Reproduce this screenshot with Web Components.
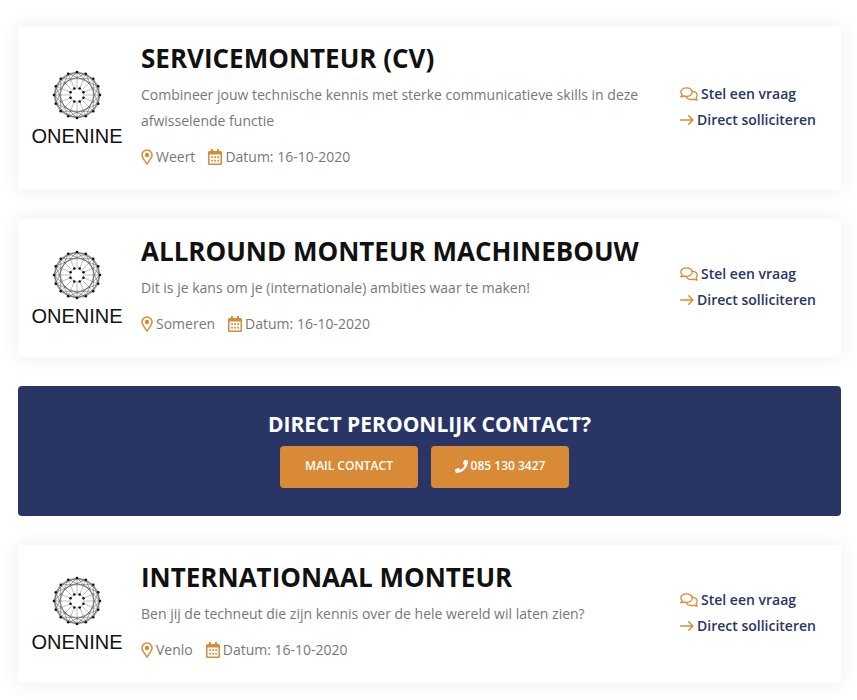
<!DOCTYPE html>
<html lang="nl">
<head>
<meta charset="utf-8">
<meta name="viewport" content="width=device-width, initial-scale=1">
<title>Vacatures</title>
<style>
  :root {
    --navy: #293565;
    --orange: #d98a36;
    --ink: #111;
    --grey: #777;
  }
  body {
    margin: 0;
    background: #fff;
    color: var(--grey);
    font: 14px/26px "Open Sans", "Noto Sans", sans-serif;
  }
</style>
</head>
<body>
<job-list>
  <job-card place="Weert" date="16-10-2020">
    <span slot="title">SERVICEMONTEUR (CV)</span>
    Combineer jouw technische kennis met sterke communicatieve skills in deze afwisselende functie
  </job-card>
  <job-card place="Someren" date="16-10-2020">
    <span slot="title">ALLROUND MONTEUR MACHINEBOUW</span>
    Dit is je kans om je (internationale) ambities waar te maken!
  </job-card>
  <contact-banner phone="085 130 3427">DIRECT PEROONLIJK CONTACT?</contact-banner>
  <job-card place="Venlo" date="16-10-2020">
    <span slot="title">INTERNATIONAAL MONTEUR</span>
    Ben jij de techneut die zijn kennis over de hele wereld wil laten zien?
  </job-card>
</job-list>

<script>
const ICONS = {
  pin: `<svg viewBox="0 0 12 16" width="12" height="16"><path d="M6 15C4.900 13.300 1 8.700 1 6a5 5 0 0 1 10 0C11 8.700 7.100 13.300 6 15z" fill="none" stroke="currentColor" stroke-width="1.500" stroke-linejoin="round"/><circle cx="6" cy="6" r="2.200" fill="currentColor"/></svg>`,
  calendar: `<svg viewBox="0 0 14 16" width="14" height="16"><path fill="currentColor" fill-rule="evenodd" d="M3 .4a.4.400 0 0 1 .4-.4h1.200a.4.400 0 0 1 .4.400V2h4V.4a.4.400 0 0 1 .4-.4h1.200a.4.400 0 0 1 .4.400V2h1.500A1.500 1.500 0 0 1 14 3.500v11a1.500 1.500 0 0 1-1.500 1.500h-11A1.500 1.500 0 0 1 0 14.500v-11A1.500 1.500 0 0 1 1.500 2H3zM1.500 5.500v8.600c0 .2.200.4.400.4h10.200c.2 0 .4-.2.400-.4V5.500z"/><path fill="currentColor" d="M3.200 7.200h1.700v1.700H3.200zm3 0h1.700v1.700H6.200zm3 0h1.700v1.700H9.200zm-6 3.500h1.700v1.700H3.200zm3 0h1.700v1.700H6.200zm3 0h1.700v1.700H9.200z"/></svg>`,
  chat: `<svg viewBox="0 0 18 14" width="18" height="14" fill="none" stroke="currentColor" stroke-width="1.300" stroke-linejoin="round" stroke-linecap="round"><path d="M6.500.8c3.200 0 5.700 1.900 5.700 4.300s-2.500 4.300-5.700 4.300c-.9 0-1.800-.2-2.500-.5-.8.500-1.900.9-3.200.9.700-.7 1.100-1.500 1.300-2.200C1.300 6.900.8 6 .8 5.100.8 2.700 3.300.8 6.500.8z"/><path d="M12.200 4.400c2.900.1 5 1.800 5 4 0 .9-.5 1.800-1.200 2.500.2.700.6 1.500 1.300 2.200-1.300 0-2.400-.4-3.200-.9-.8.300-1.600.5-2.600.5-2.200 0-4.200-1-5-2.400"/></svg>`,
  arrow: `<svg viewBox="0 0 14 14" width="14" height="14"><path d="M.7 7h12M8.700 2.800 12.900 7l-4.200 4.200" fill="none" stroke="currentColor" stroke-width="1.400" stroke-linecap="round" stroke-linejoin="round"/></svg>`,
  phone: `<svg viewBox="0 0 512 512" width="13" height="13"><path fill="currentColor" d="M493.400 24.600l-104-24c-11.300-2.600-22.900 3.300-27.500 13.900l-48 112c-4.200 9.800-1.400 21.300 6.900 28l60.600 49.600c-36 76.700-98.900 140.500-177.200 177.200l-49.600-60.600c-6.800-8.300-18.200-11.100-28-6.900l-112 48C3.900 366.500-2 378.100.6 389.400l24 104C27.100 504.200 36.700 512 48 512c256.100 0 464-207.500 464-464 0-11.200-7.700-20.900-18.600-23.400z"/></svg>`
};

class UiIcon extends HTMLElement {
  constructor() {
    super();
    this.attachShadow({ mode: "open" });
  }

  connectedCallback() {
    this.shadowRoot.innerHTML = `
      <style>
        :host { display: inline-flex; flex: none; color: var(--orange); }
        svg { display: block; }
      </style>
      ${ICONS[this.getAttribute("name")] || ""}
    `;
  }
}

class CompanyLogo extends HTMLElement {
  constructor() {
    super();
    this.attachShadow({ mode: "open" });
  }

  // point at sixteenth i of the circle with radius r
  _point(i, r) {
    const a = i * Math.PI / 8;
    return [(25 + r * Math.sin(a)).toFixed(2), (25 - r * Math.cos(a)).toFixed(2)];
  }

  _line(from, to) {
    return `M${from.join(" ")}L${to.join(" ")}`;
  }

  connectedCallback() {
    let chords = "";
    let spokes = "";
    let dots = "";
    for (let i = 0; i < 16; i++) {
      const p = this._point(i, 23);
      chords += this._line(p, this._point(i + 1, 23));
      chords += this._line(p, this._point(i + 2, 23));
      chords += this._line(p, this._point(i + 4, 23));
      spokes += this._line(this._point(i, 8), this._point(i, 23));
      dots += `<circle cx="${p[0]}" cy="${p[1]}" r="1.300"/>`;
      if (i % 2) {
        const q = this._point(i, 7);
        dots += `<circle cx="${q[0]}" cy="${q[1]}" r="1.300"/>`;
      }
    }
    this.shadowRoot.innerHTML = `
      <style>
        :host { display: flex; flex-direction: column; align-items: center; gap: 4px; color: var(--ink); }
        svg { display: block; }
        span { font: 20px/24px "Liberation Sans", Arial, sans-serif; }
      </style>
      <svg viewBox="0 0 50 50" width="50" height="50" aria-hidden="true">
        <g fill="none" stroke="#222">
          <path d="${chords}" stroke-width=".4"/>
          <path d="${spokes}" stroke-width=".3"/>
          <circle cx="25" cy="25" r="17" stroke="#777" stroke-width=".8"/>
          <circle cx="25" cy="25" r="7" stroke-width=".3"/>
        </g>
        <g fill="#111">${dots}</g>
      </svg>
      <span>ONENINE</span>
    `;
  }
}

class JobCard extends HTMLElement {
  constructor() {
    super();
    this.attachShadow({ mode: "open" });
  }

  connectedCallback() {
    this.shadowRoot.innerHTML = `
      <style>
        :host {
          display: grid;
          grid-template-columns: 92px minmax(0, 1fr) 137px;
          column-gap: 18px;
          align-items: center;
          padding: 14px 24px 20px 13px;
          border-radius: 4px;
          background: #fff;
          box-shadow: 0 0 20px rgba(0, 0, 0, .08);
        }
        company-logo { padding-top: 8px; }
        nav { padding-top: 4px; }
        h2 { margin: 0 0 6px; color: var(--ink); font-size: 26px; line-height: 36px; font-weight: 700; }
        p { margin: 0; padding-right: 20px; }
        ul { display: flex; gap: 13px; margin: 10px 0 0; padding: 0; list-style: none; }
        li, a { display: flex; align-items: center; gap: 3px; }
        a { color: var(--navy); font-weight: 600; text-decoration: none; white-space: nowrap; }
      </style>
      <company-logo></company-logo>
      <div>
        <h2><slot name="title"></slot></h2>
        <p><slot></slot></p>
        <ul>
          <li><ui-icon name="pin"></ui-icon>${this.getAttribute("place")}</li>
          <li><ui-icon name="calendar"></ui-icon>Datum: ${this.getAttribute("date")}</li>
        </ul>
      </div>
      <nav>
        <a href="#vraag"><ui-icon name="chat"></ui-icon>Stel een vraag</a>
        <a href="#solliciteren"><ui-icon name="arrow"></ui-icon>Direct solliciteren</a>
      </nav>
    `;
  }
}

class ContactBanner extends HTMLElement {
  constructor() {
    super();
    this.attachShadow({ mode: "open" });
  }

  connectedCallback() {
    this.shadowRoot.innerHTML = `
      <style>
        :host {
          display: block;
          padding: 24px 24px 28px;
          border-radius: 4px;
          background: var(--navy);
          color: #fff;
          text-align: center;
        }
        h3 { margin: 0 0 8px; font-size: 21px; line-height: 28px; font-weight: 700; }
        div { display: flex; justify-content: center; gap: 13px; padding-right: 10px; }
        button {
          display: flex;
          align-items: center;
          justify-content: center;
          gap: 3px;
          min-width: 138px;
          padding: 10px 22px 12px;
          border: 0;
          border-radius: 4px;
          background: var(--orange);
          color: #fff;
          font: 600 12px/20px "Open Sans", "Noto Sans", sans-serif;
        }
        ui-icon { --orange: #fff; }
      </style>
      <h3><slot></slot></h3>
      <div>
        <button type="button">MAIL CONTACT</button>
        <button type="button"><ui-icon name="phone"></ui-icon>${this.getAttribute("phone")}</button>
      </div>
    `;
  }
}

class JobList extends HTMLElement {
  constructor() {
    super();
    this.attachShadow({ mode: "open" });
    this.shadowRoot.innerHTML = `
      <style>
        :host { display: flex; flex-direction: column; gap: 29px; padding: 26px 16px 16px 18px; }
      </style>
      <slot></slot>
    `;
  }
}

customElements.define("ui-icon", UiIcon);
customElements.define("company-logo", CompanyLogo);
customElements.define("job-card", JobCard);
customElements.define("contact-banner", ContactBanner);
customElements.define("job-list", JobList);
</script>
</body>
</html>
